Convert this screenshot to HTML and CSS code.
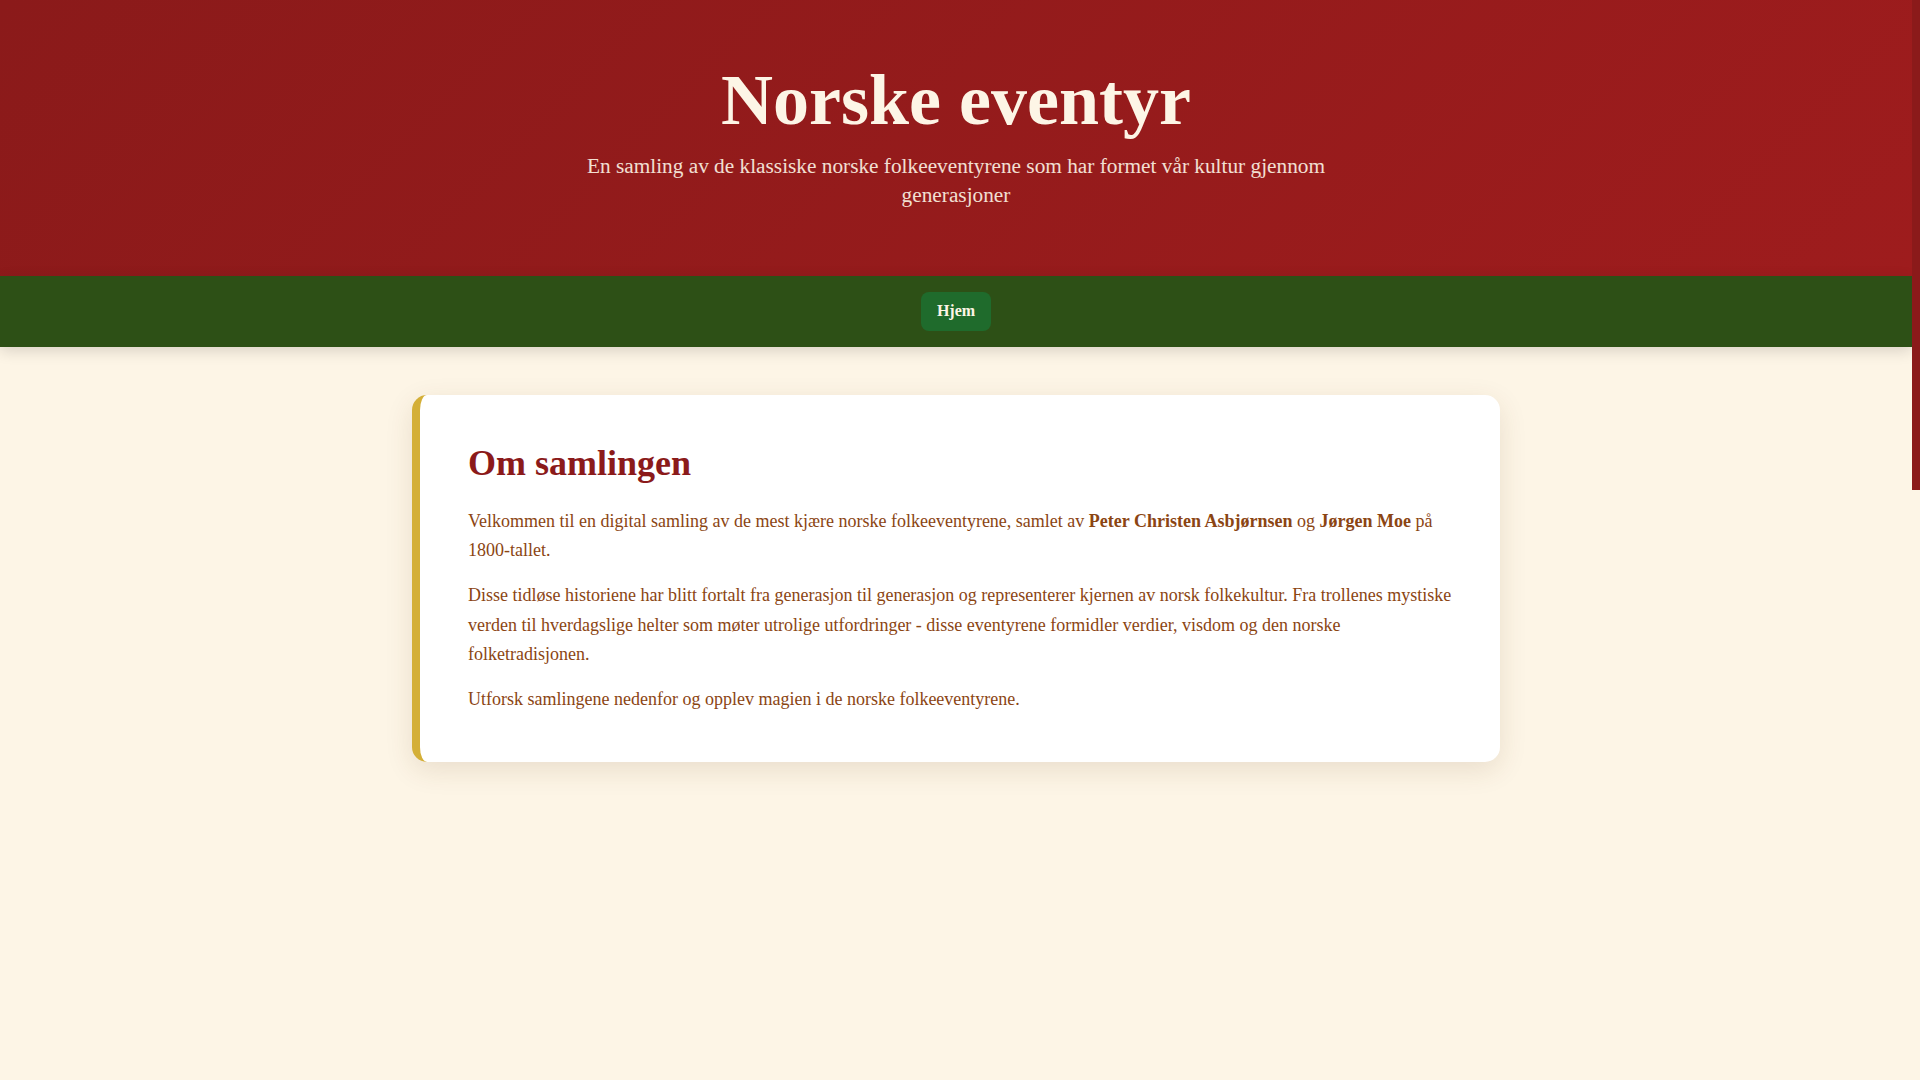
FILE: index.html
```html
<!DOCTYPE html>
<html lang="no">
<head>
<meta charset="utf-8">
<title>Norske eventyr</title>
<link rel="stylesheet" href="styles.css">
</head>
<body>
<div class="page">
  <header class="site-header">
    <h1 class="site-title">Norske eventyr</h1>
    <p class="site-subtitle">En samling av de klassiske norske folkeeventyrene som har formet vår kultur gjennom generasjoner</p>
  </header>
  <nav class="site-nav">
    <a class="nav-link active" href="#">Hjem</a>
  </nav>
  <main class="content">
    <section class="intro-card">
      <h2 class="intro-title">Om samlingen</h2>
      <p>Velkommen til en digital samling av de mest kjære norske folkeeventyrene, samlet av <strong>Peter Christen Asbjørnsen</strong> og <strong>Jørgen Moe</strong> på 1800-tallet.</p>
      <p>Disse tidløse historiene har blitt fortalt fra generasjon til generasjon og representerer kjernen av norsk folkekultur. Fra trollenes mystiske verden til hverdagslige helter som møter utrolige utfordringer - disse eventyrene formidler verdier, visdom og den norske folketradisjonen.</p>
      <p>Utforsk samlingene nedenfor og opplev magien i de norske folkeeventyrene.</p>
    </section>
  </main>
</div>
<div class="fake-scrollbar" aria-hidden="true"><div class="fake-thumb"></div></div>
</body>
</html>
```

FILE: styles.css
```css
html {
  background: #fdf5e6;
}
::-webkit-scrollbar {
  width: 0;
}
* {
  box-sizing: border-box;
}
body {
  margin: 0;
  background: #fdf5e6;
  font-family: "Liberation Serif", "Times New Roman", serif;
  color: #8b4513;
}
.page {
  margin-right: 8px;
}
.fake-scrollbar {
  position: fixed;
  top: 0;
  right: 0;
  width: 8px;
  height: 100vh;
  background: #fdf5e6;
}
.fake-thumb {
  height: 490px;
  background: #8b1a1a;
}
.site-header {
  background: linear-gradient(135deg, #8b1a1a 0%, #9e1c1d 100%);
  color: #fdf5e6;
  text-align: center;
  padding: 64px 2rem 66px;
}
.site-title {
  margin: 0 0 16px;
  font-size: 72px;
  line-height: 1;
  font-weight: bold;
}
.site-subtitle {
  margin: 0 auto;
  max-width: 800px;
  font-size: 21.3px;
  line-height: 1.35;
  opacity: 0.9;
}
.site-nav {
  background: #2d5016;
  display: flex;
  justify-content: center;
  padding: 16px;
  box-shadow: 0 4px 14px rgba(0, 0, 0, 0.14);
  position: relative;
}
.nav-link {
  display: block;
  color: #fdf5e6;
  text-decoration: none;
  font-weight: bold;
  font-size: 16px;
  line-height: 20.8px;
  padding: 9.6px 16px;
  border-radius: 8px;
}
.nav-link.active {
  background: #1f6b2c;
}
.content {
  min-height: 2034px;
  padding: 48px 2rem;
}
.intro-card {
  max-width: 1088px;
  margin: 0 auto;
  background: #ffffff;
  border-left: 8px solid #d4af37;
  border-radius: 15px;
  padding: 47px 48px 48px;
  box-shadow: 0 8px 28px rgba(90, 60, 20, 0.12);
}
.intro-title {
  margin: 0 0 22.5px;
  color: #8b1a1a;
  font-size: 36px;
  line-height: normal;
  font-weight: bold;
}
.intro-card p {
  margin: 0 0 16px;
  font-size: 18px;
  line-height: 29.2px;
}
.intro-card p:last-child {
  margin-bottom: 0;
}
.intro-card strong {
  font-weight: bold;
}
```
